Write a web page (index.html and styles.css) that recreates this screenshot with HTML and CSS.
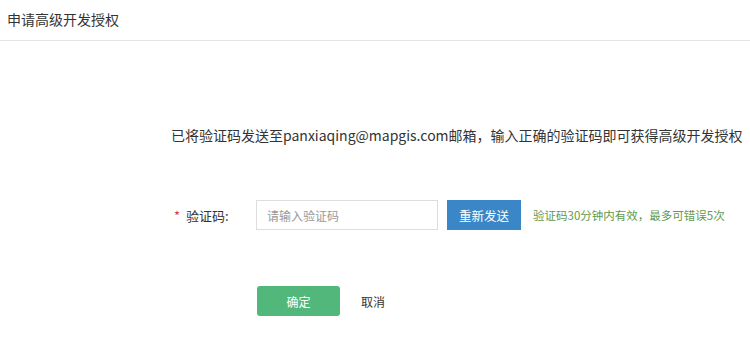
FILE: index.html
```html
<!DOCTYPE html>
<html lang="zh-CN">
<head>
<meta charset="utf-8">
<title>申请高级开发授权</title>
<link rel="stylesheet" href="styles.css">
</head>
<body>
<div class="header">申请高级开发授权</div>
<div class="content">
  <p class="message">已将验证码发送至panxiaqing@mapgis.com邮箱，输入正确的验证码即可获得高级开发授权</p>
  <div class="form-row">
    <label class="label"><span class="star">*</span>验证码:</label>
    <input class="input" type="text" placeholder="请输入验证码">
    <button class="btn btn-blue">重新发送</button>
    <span class="hint">验证码30分钟内有效，最多可错误5次</span>
  </div>
  <div class="actions">
    <button class="btn btn-green">确定</button>
    <button class="btn-link">取消</button>
  </div>
</div>
</body>
</html>
```
FILE: styles.css
```css
* { box-sizing: border-box; }
html, body { margin: 0; padding: 0; background: #fff; }
body {
  font-family: "Noto Sans CJK SC", "Noto Sans", sans-serif;
  font-size: 14px;
  color: #333;
}
.header {
  height: 41px;
  line-height: 38px;
  padding: 0 7px;
  border-bottom: 1px solid #e3e3e3;
  font-size: 14px;
  color: #333;
}
.content {
  padding-left: 171px;
}
.message {
  margin: 84px 0 0;
  line-height: 20px;
  font-size: 14px;
  color: #333;
  white-space: nowrap;
}
.form-row {
  display: flex;
  align-items: center;
  margin-top: 55px;
  height: 30px;
}
.label {
  width: 85px;
  padding-left: 3px;
  font-size: 13px;
  color: #333;
}
.star {
  color: #e4393c;
  margin-right: 6px;
}
.input {
  width: 182px;
  height: 30px;
  border: 1px solid #ddd;
  padding: 0 10px;
  font-family: inherit;
  font-size: 12px;
  color: #333;
  outline: none;
}
.input::placeholder { color: #999; }
.btn {
  border: none;
  font-family: inherit;
  font-size: 12px;
  color: #fff;
  height: 30px;
  cursor: pointer;
}
.btn-blue {
  margin-left: 9px;
  width: 74px;
  background: #3b86c7;
  font-size: 12.5px;
}
.hint {
  margin-left: 12px;
  font-size: 11.5px;
  color: #63994b;
}
.actions {
  display: flex;
  align-items: center;
  margin-top: 56px;
  padding-left: 86px;
}
.btn-green {
  width: 83px;
  background: #52b77b;
  border-radius: 3px;
}
.btn-link {
  margin-left: 21px;
  background: none;
  border: none;
  font-family: inherit;
  font-size: 12px;
  color: #333;
  padding: 0;
}
```
